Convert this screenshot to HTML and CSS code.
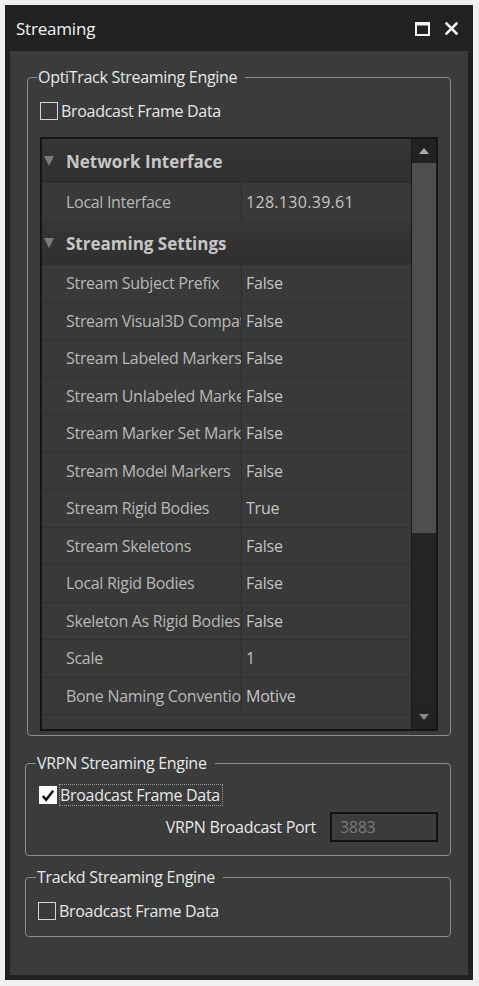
FILE: index.html
```html
<!DOCTYPE html>
<html>
<head>
<meta charset="utf-8">
<title>Streaming</title>
<link rel="stylesheet" href="styles.css">
</head>
<body>
<div class="window">
  <div class="titlebar">
    <span class="title">Streaming</span>
    <div class="title-icons">
      <svg class="ico-max" width="15" height="14" viewBox="0 0 15 14"><rect x="1" y="1" width="13" height="12" fill="none" stroke="#f2f2f2" stroke-width="2"/><rect x="1" y="1" width="13" height="2.5" fill="#f2f2f2"/></svg>
      <svg class="ico-close" width="13" height="13" viewBox="0 0 13 13"><path d="M1.5 1.5 L11.5 11.5 M11.5 1.5 L1.5 11.5" stroke="#f2f2f2" stroke-width="2.6" stroke-linecap="square"/></svg>
    </div>
  </div>
  <div class="content">
    <fieldset class="group group-opti">
      <legend>OptiTrack Streaming Engine</legend>
      <label class="check-row">
        <span class="box"></span>
        <span class="check-label">Broadcast Frame Data</span>
      </label>
      <div class="grid">
        <div class="rows">
          <div class="cat"><span class="tri"></span><span>Network Interface</span></div>
          <div class="prop tall"><span class="name">Local Interface</span><span class="val num">128.130.39.61</span></div>
          <div class="cat"><span class="tri"></span><span>Streaming Settings</span></div>
          <div class="prop"><span class="name">Stream Subject Prefix</span><span class="val">False</span></div>
          <div class="prop"><span class="name">Stream Visual3D Compatibility</span><span class="val">False</span></div>
          <div class="prop"><span class="name">Stream Labeled Markers</span><span class="val">False</span></div>
          <div class="prop"><span class="name">Stream Unlabeled Markers</span><span class="val">False</span></div>
          <div class="prop"><span class="name">Stream Marker Set Markers</span><span class="val">False</span></div>
          <div class="prop"><span class="name">Stream Model Markers</span><span class="val">False</span></div>
          <div class="prop"><span class="name">Stream Rigid Bodies</span><span class="val">True</span></div>
          <div class="prop"><span class="name">Stream Skeletons</span><span class="val">False</span></div>
          <div class="prop"><span class="name">Local Rigid Bodies</span><span class="val">False</span></div>
          <div class="prop"><span class="name">Skeleton As Rigid Bodies</span><span class="val">False</span></div>
          <div class="prop"><span class="name">Scale</span><span class="val">1</span></div>
          <div class="prop last"><span class="name">Bone Naming Convention</span><span class="val">Motive</span></div>
        </div>
        <div class="scrollbar">
          <div class="sb-btn"><span class="up"></span></div>
          <div class="sb-thumb"></div>
          <div class="sb-track"></div>
          <div class="sb-btn"><span class="down"></span></div>
        </div>
      </div>
    </fieldset>

    <fieldset class="group group-vrpn">
      <legend>VRPN Streaming Engine</legend>
      <label class="check-row">
        <span class="box checked"><svg width="17" height="17" viewBox="0 0 17 17"><path d="M3 9 L6.5 13 L14 3.5" fill="none" stroke="#111" stroke-width="2.6"/></svg></span>
        <span class="check-label focus">Broadcast Frame Data</span>
      </label>
      <div class="port-row">
        <span class="port-label">VRPN Broadcast Port</span>
        <span class="port-input">3883</span>
      </div>
    </fieldset>

    <fieldset class="group group-trackd">
      <legend>Trackd Streaming Engine</legend>
      <label class="check-row">
        <span class="box"></span>
        <span class="check-label">Broadcast Frame Data</span>
      </label>
    </fieldset>
  </div>
</div>
</body>
</html>
```
FILE: styles.css
```css
html, body {
  margin: 0;
  padding: 0;
  background: #f0f0f0;
}
body {
  font-family: "Open Sans", "Noto Sans", sans-serif;
  font-size: 16px;
  color: #e4e4e4;
}
.window {
  margin: 5px 0 0 5px;
  width: 468px;
  height: 975px;
  background: #212121;
  display: flex;
  flex-direction: column;
}
.titlebar {
  height: 46px;
  flex: none;
  display: flex;
  align-items: center;
  justify-content: space-between;
  padding: 1px 15px 0 11px;
  box-sizing: border-box;
}
.title {
  font-size: 17px;
  color: #f2f2f2;
  letter-spacing: -0.2px;
}
.title-icons {
  display: flex;
  align-items: center;
  gap: 15px;
}
.content {
  margin: 0 5px 5px 5px;
  height: 924px;
  background: #3b3b3b;
  padding-top: 16px;
  box-sizing: border-box;
}
.group {
  border: 1px solid #8d8d8d;
  border-radius: 4px;
  margin: 0 17px 0 17px;
  padding: 0 12px;
  min-width: 0;
}
.group legend {
  margin-left: -3px;
  padding: 0 8px 0 1px;
  line-height: 20px;
  font-size: 16px;
  color: #e8e8e8;
  letter-spacing: -0.3px;
}
.group-opti {
  padding-bottom: 4px;
}
.group-vrpn {
  margin: 17px 17px 0 15px;
  padding: 0 12px 13px 13px;
}
.group-trackd {
  margin: 11px 17px 0 15px;
  padding: 0 12px 15px 12px;
}
.group-trackd legend {
  margin-left: -2px;
}
.check-row {
  display: flex;
  align-items: center;
  height: 20px;
  margin-top: 14px;
  gap: 3px;
}
.group-vrpn .check-row {
  margin-top: 12px;
}
.box {
  width: 16px;
  height: 16px;
  border: 1.5px solid #d6d6d6;
  flex: none;
  display: flex;
  align-items: center;
  justify-content: center;
}
.box.checked {
  background: #fafafa;
  border-color: #fafafa;
}
.check-label {
  color: #e8e8e8;
  letter-spacing: -0.3px;
  line-height: 20px;
}
.check-label.focus {
  outline: 1px dotted #9a9a9a;
  outline-offset: 0;
  padding-right: 2px;
}

/* property grid */
.grid {
  margin-top: 16px;
  height: 594px;
  box-sizing: border-box;
  border: 2px solid #151515;
  display: flex;
  background: #393939;
}
.rows {
  flex: 1;
  display: flex;
  flex-direction: column;
  color: #b8b8b8;
  min-width: 0;
}
.cat {
  height: 44px;
  flex: none;
  display: flex;
  align-items: center;
  background: linear-gradient(#363636, #2f2f2f);
  font-weight: bold;
  font-size: 17px;
  color: #c6c6c6;
  letter-spacing: 0;
  padding-left: 2px;
}
.tri {
  width: 0;
  height: 0;
  border-left: 5px solid transparent;
  border-right: 5px solid transparent;
  border-top: 10px solid #7a7a7a;
  margin-right: 12px;
}
.prop {
  height: 37.5px;
  flex: none;
  display: flex;
  align-items: stretch;
  border-bottom: 1px solid #303030;
  box-sizing: border-box;
}
.prop.tall {
  height: 38px;
  border-bottom: none;
}
.name {
  width: 200px;
  flex: none;
  box-sizing: border-box;
  padding-left: 24px;
  border-right: 1px solid #2c2c2c;
  white-space: nowrap;
  overflow: hidden;
  display: flex;
  align-items: center;
  letter-spacing: -0.3px;
}
.val {
  padding-left: 4px;
  display: flex;
  align-items: center;
  color: #c4c4c4;
  letter-spacing: -0.2px;
}
.val.num {
  letter-spacing: 0.3px;
}
.scrollbar {
  width: 24px;
  flex: none;
  border-left: 1px solid #161616;
  display: flex;
  flex-direction: column;
}
.sb-btn {
  height: 24px;
  flex: none;
  background: #222222;
  display: flex;
  align-items: center;
  justify-content: center;
}
.up {
  width: 0;
  height: 0;
  border-left: 5px solid transparent;
  border-right: 5px solid transparent;
  border-bottom: 6px solid #a8a8a8;
}
.down {
  width: 0;
  height: 0;
  border-left: 5px solid transparent;
  border-right: 5px solid transparent;
  border-top: 6px solid #8a8a8a;
}
.sb-thumb {
  height: 370px;
  flex: none;
  background: #4e4e4e;
}
.sb-track {
  flex: 1;
  background: #242424;
}

/* vrpn port */
.port-row {
  display: flex;
  justify-content: flex-end;
  align-items: center;
  margin-top: 7px;
  gap: 14px;
}
.port-label {
  color: #e8e8e8;
  letter-spacing: -0.3px;
}
.port-input {
  width: 108px;
  height: 30px;
  box-sizing: border-box;
  border: 2px solid #121212;
  background: #3b3b3b;
  color: #7a7a7a;
  padding-left: 8px;
  display: flex;
  align-items: center;
  letter-spacing: -0.3px;
}
```
